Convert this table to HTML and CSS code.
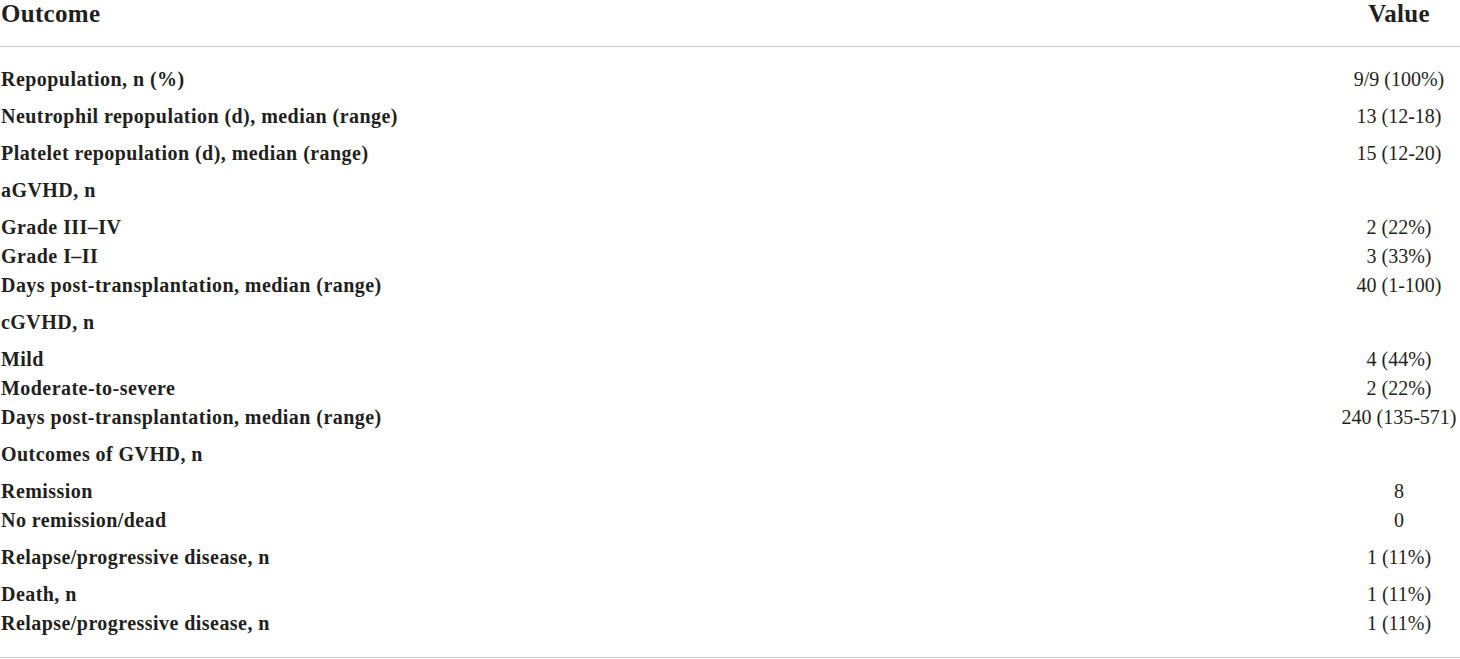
FILE: index.html
```html
<!DOCTYPE html>
<html>
<head>
<meta charset="utf-8">
<link rel="stylesheet" href="styles.css">
</head>
<body>
<table class="outcomes">
  <thead>
    <tr><th class="label">Outcome</th><th class="value">Value</th></tr>
  </thead>
  <tbody>
    <tr class="first"><td class="label">Repopulation, n (%)</td><td class="value">9/9 (100%)</td></tr>
    <tr class="gap"><td class="label">Neutrophil repopulation (d), median (range)</td><td class="value">13 (12-18)</td></tr>
    <tr class="gap"><td class="label">Platelet repopulation (d), median (range)</td><td class="value">15 (12-20)</td></tr>
    <tr class="gap"><td class="label">aGVHD, n</td><td class="value"></td></tr>
    <tr class="gap"><td class="label">Grade III–IV</td><td class="value">2 (22%)</td></tr>
    <tr><td class="label">Grade I–II</td><td class="value">3 (33%)</td></tr>
    <tr><td class="label">Days post-transplantation, median (range)</td><td class="value">40 (1-100)</td></tr>
    <tr class="gap"><td class="label">cGVHD, n</td><td class="value"></td></tr>
    <tr class="gap"><td class="label">Mild</td><td class="value">4 (44%)</td></tr>
    <tr><td class="label">Moderate-to-severe</td><td class="value">2 (22%)</td></tr>
    <tr><td class="label">Days post-transplantation, median (range)</td><td class="value">240 (135-571)</td></tr>
    <tr class="gap"><td class="label">Outcomes of GVHD, n</td><td class="value"></td></tr>
    <tr class="gap"><td class="label">Remission</td><td class="value">8</td></tr>
    <tr><td class="label">No remission/dead</td><td class="value">0</td></tr>
    <tr class="gap"><td class="label">Relapse/progressive disease, n</td><td class="value">1 (11%)</td></tr>
    <tr class="gap"><td class="label">Death, n</td><td class="value">1 (11%)</td></tr>
    <tr class="last"><td class="label">Relapse/progressive disease, n</td><td class="value">1 (11%)</td></tr>
  </tbody>
</table>
</body>
</html>
```

FILE: styles.css
```css
html, body {
  margin: 0;
  padding: 0;
  background: #ffffff;
}

body {
  font-family: "Liberation Serif", "Times New Roman", serif;
  color: #231f20;
}

.outcomes {
  width: 100%;
  border-collapse: collapse;
  border-spacing: 0;
}

.outcomes th {
  font-size: 25px;
  font-weight: 700;
  line-height: 28px;
  padding: 0 0 18px 0;
  border-bottom: 1px solid #c9c9c9;
}

.outcomes td {
  font-size: 20px;
  line-height: 29px;
  padding: 0;
  vertical-align: top;
}

.outcomes .label {
  text-align: left;
  padding-left: 1px;
}

.outcomes th.label {
  letter-spacing: 0.3px;
}

.outcomes td.label {
  font-weight: 700;
  letter-spacing: 0.45px;
}

.outcomes .value {
  width: 122px;
  text-align: center;
  white-space: nowrap;
  font-weight: 400;
}

.outcomes th.value {
  font-weight: 700;
  letter-spacing: 0.3px;
}

.outcomes tr.first td {
  padding-top: 18px;
}

.outcomes tr.gap td {
  padding-top: 8px;
}

.outcomes tr.last td {
  padding-bottom: 19px;
  border-bottom: 1px solid #c9c9c9;
}
```
